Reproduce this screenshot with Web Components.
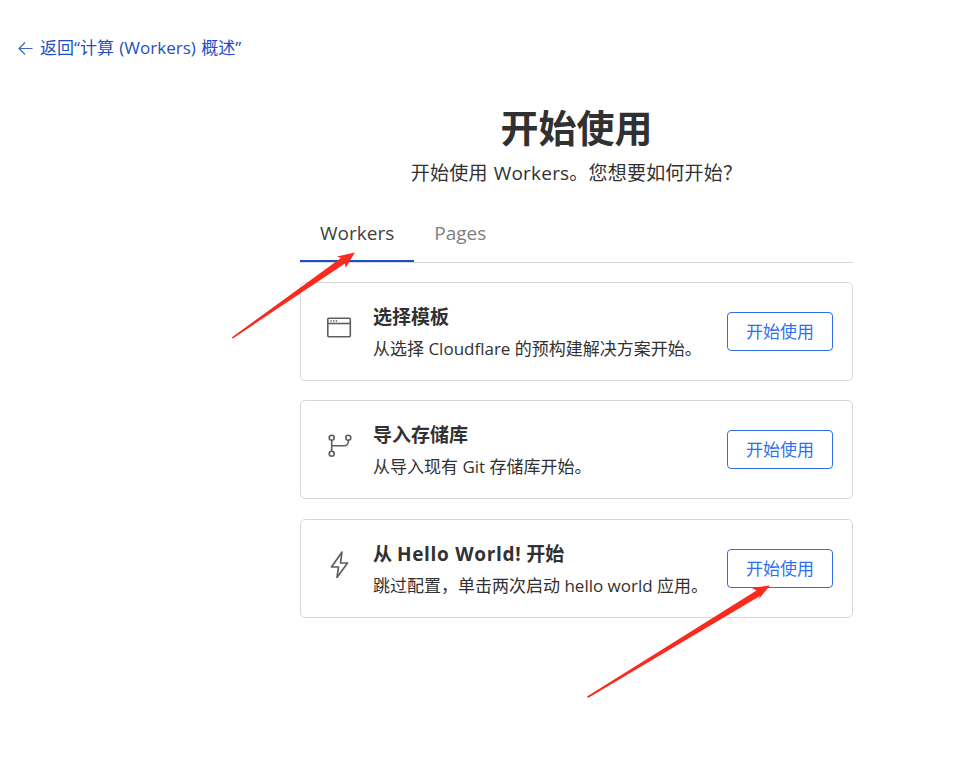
<!DOCTYPE html>
<html lang="zh-CN">
<head>
<meta charset="utf-8">
<title>开始使用</title>
<style>
    html,body{ margin:0; background:#fff; }
    body{
        height:774px;
        position:relative;
        overflow:hidden;
        font-family:"Open Sans","Noto Sans CJK SC",sans-serif;
        color:#313131;
    }
</style>
</head>
<body>
<template id="back-tpl">
    <style>
        :host{ display:block; padding:38px 0 0 18px; }
        a{
            display:inline-flex;
            align-items:center;
            gap:7px;
            color:#1d4fc4;
            font-size:17px;
            line-height:20px;
            word-spacing:1px;
            text-decoration:none;
        }
        svg{ width:15px; height:15px; display:block; }
    </style>
    <a href="#">
        <svg viewBox="0 0 15 15" fill="none" stroke="#3f63c6" stroke-width="1.2"><path d="M14.5 7.5H1M7 1.5 1 7.5l6 6"/></svg>
        <span><slot></slot></span>
    </a>
</template>

<template id="head-tpl">
    <style>
        :host{ display:block; text-align:center; }
        h1{ margin:0; font-size:38px; line-height:48px; font-weight:700; color:#313131; }
        p{ margin:9px 0 0; font-size:19px; line-height:26px; letter-spacing:.2px; word-spacing:1px; color:#313131; }
    </style>
    <h1><slot name="title"></slot></h1>
    <p><slot name="sub"></slot></p>
</template>

<template id="tabs-tpl">
    <style>
        :host{ display:flex; border-bottom:1px solid #d9d9d9; height:51px; box-sizing:content-box; }
    </style>
    <slot></slot>
</template>

<template id="tab-tpl">
    <style>
        :host{
            display:block;
            padding:9px 20px 0;
            height:51px;
            box-sizing:border-box;
            font-size:19px;
            line-height:26px;
            color:#808080;
            margin-bottom:-1px;
        }
        :host([active]){ color:#404040; border-bottom:2px solid #1d4fc4; }
    </style>
    <slot></slot>
</template>

<template id="card-tpl">
    <style>
        :host{
            display:flex;
            align-items:center;
            height:99px;
            box-sizing:border-box;
            border:1px solid #d9d9d9;
            border-radius:5px;
            padding:0 19px 0 25px;
        }
        .icon{ width:27px; height:27px; margin:0 20px 8px 0; flex:none; }
        .text{ flex:1; min-width:0; padding-top:1px; }
        .title{ font-size:19px; line-height:26px; font-weight:700; color:#313131; }
        .desc{ font-size:17px; line-height:22px; margin-top:8px; color:#313131; white-space:nowrap; }
        button{
            flex:none;
            width:106px;
            height:39px;
            border:1px solid #2f6fed;
            border-radius:4px;
            background:#fff;
            color:#2f6fed;
            font:inherit;
            font-size:17px;
            padding:0 0 2px;
        }
    </style>
    <div class="icon"><slot name="icon"></slot></div>
    <div class="text">
        <div class="title"><slot name="title"></slot></div>
        <div class="desc"><slot name="desc"></slot></div>
    </div>
    <button>开始使用</button>
</template>

<template id="arrow-tpl">
    <style>
        :host{ display:block; position:absolute; left:0; top:0; width:957px; height:774px; pointer-events:none; }
        svg{ width:100%; height:100%; display:block; }
    </style>
    <svg viewBox="0 0 957 774">
        <g fill="#fb2a1e">
            <path d="M232 337.3 341 258 337 256.5 355 252.5 345.5 268 345 263.5 232.5 338.7Z"/>
            <path d="M587 696.4 756.5 590.5 752 588 770 585.5 758 600 760 596 588 698Z"/>
        </g>
    </svg>
</template>

<back-link>返回“计算 (Workers) 概述”</back-link>

<start-panel>
    <panel-head>
        <span slot="title">开始使用</span>
        <span slot="sub">开始使用 Workers&#x3002;您想要如何开始&#xFF1F;</span>
    </panel-head>
    <tab-bar>
        <tab-item active>Workers</tab-item>
        <tab-item>Pages</tab-item>
    </tab-bar>
    <start-card>
        <svg slot="icon" width="27" height="27" viewBox="0 0 27 27" fill="none" stroke="#5e5e5e" stroke-width="1.6">
            <rect x="1.8" y="4.3" width="22.5" height="18.5" rx="1"/>
            <path d="M2 9.5h22"/>
            <path d="M4.3 7h1.4M7 7h1.4M9.7 7h1.4" stroke-width="1.3"/>
        </svg>
        <span slot="title">选择模板</span>
        <span slot="desc">从选择 Cloudflare 的预构建解决方案开始。</span>
    </start-card>
    <start-card>
        <svg slot="icon" width="27" height="27" viewBox="0 0 27 27" fill="none" stroke="#5e5e5e" stroke-width="1.6">
            <circle cx="5.7" cy="5.8" r="2.5"/>
            <circle cx="5.7" cy="21.8" r="2.5"/>
            <circle cx="22.3" cy="5.8" r="2.5"/>
            <path d="M5.7 8.3v11M22.3 8.3v1.5a4 4 0 0 1-4 4H5.7"/>
        </svg>
        <span slot="title">导入存储库</span>
        <span slot="desc">从导入现有 Git 存储库开始。</span>
    </start-card>
    <start-card>
        <svg slot="icon" width="27" height="27" viewBox="0 0 27 27" fill="none" stroke="#5e5e5e" stroke-width="1.7" stroke-linejoin="round">
            <path d="M16 1 5.5 16h7L11 26.5 21.5 12h-7Z"/>
        </svg>
        <span slot="title">从 <span style="letter-spacing:.7px">Hello World!</span> 开始</span>
        <span slot="desc">跳过配置&#xFF0C;单击两次启动 hello world 应用。</span>
    </start-card>
</start-panel>

<arrow-layer></arrow-layer>

<script>
function stamp(name, tplId){
    customElements.define(name, class extends HTMLElement{
        constructor(){
            super()
            this.attachShadow({mode:"open"})
            this.shadowRoot.appendChild(document.getElementById(tplId).content.cloneNode(true))
        }
    })
}
stamp('back-link','back-tpl')
stamp('panel-head','head-tpl')
stamp('tab-bar','tabs-tpl')
stamp('tab-item','tab-tpl')
stamp('start-card','card-tpl')
stamp('arrow-layer','arrow-tpl')

class StartPanel extends HTMLElement{
    constructor(){
        super()
        this.attachShadow({mode:"open"})
        this.shadowRoot.innerHTML = `
        <style>
            :host{ display:flex; flex-direction:column; width:553px; margin:42px 0 0 300px; }
            ::slotted(tab-bar){ margin-top:25px; margin-bottom:19px; }
            ::slotted(start-card){ margin-bottom:19.5px; }
        </style>
        <slot></slot>
        `
    }
}
customElements.define('start-panel', StartPanel)
</script>
</body>
</html>
